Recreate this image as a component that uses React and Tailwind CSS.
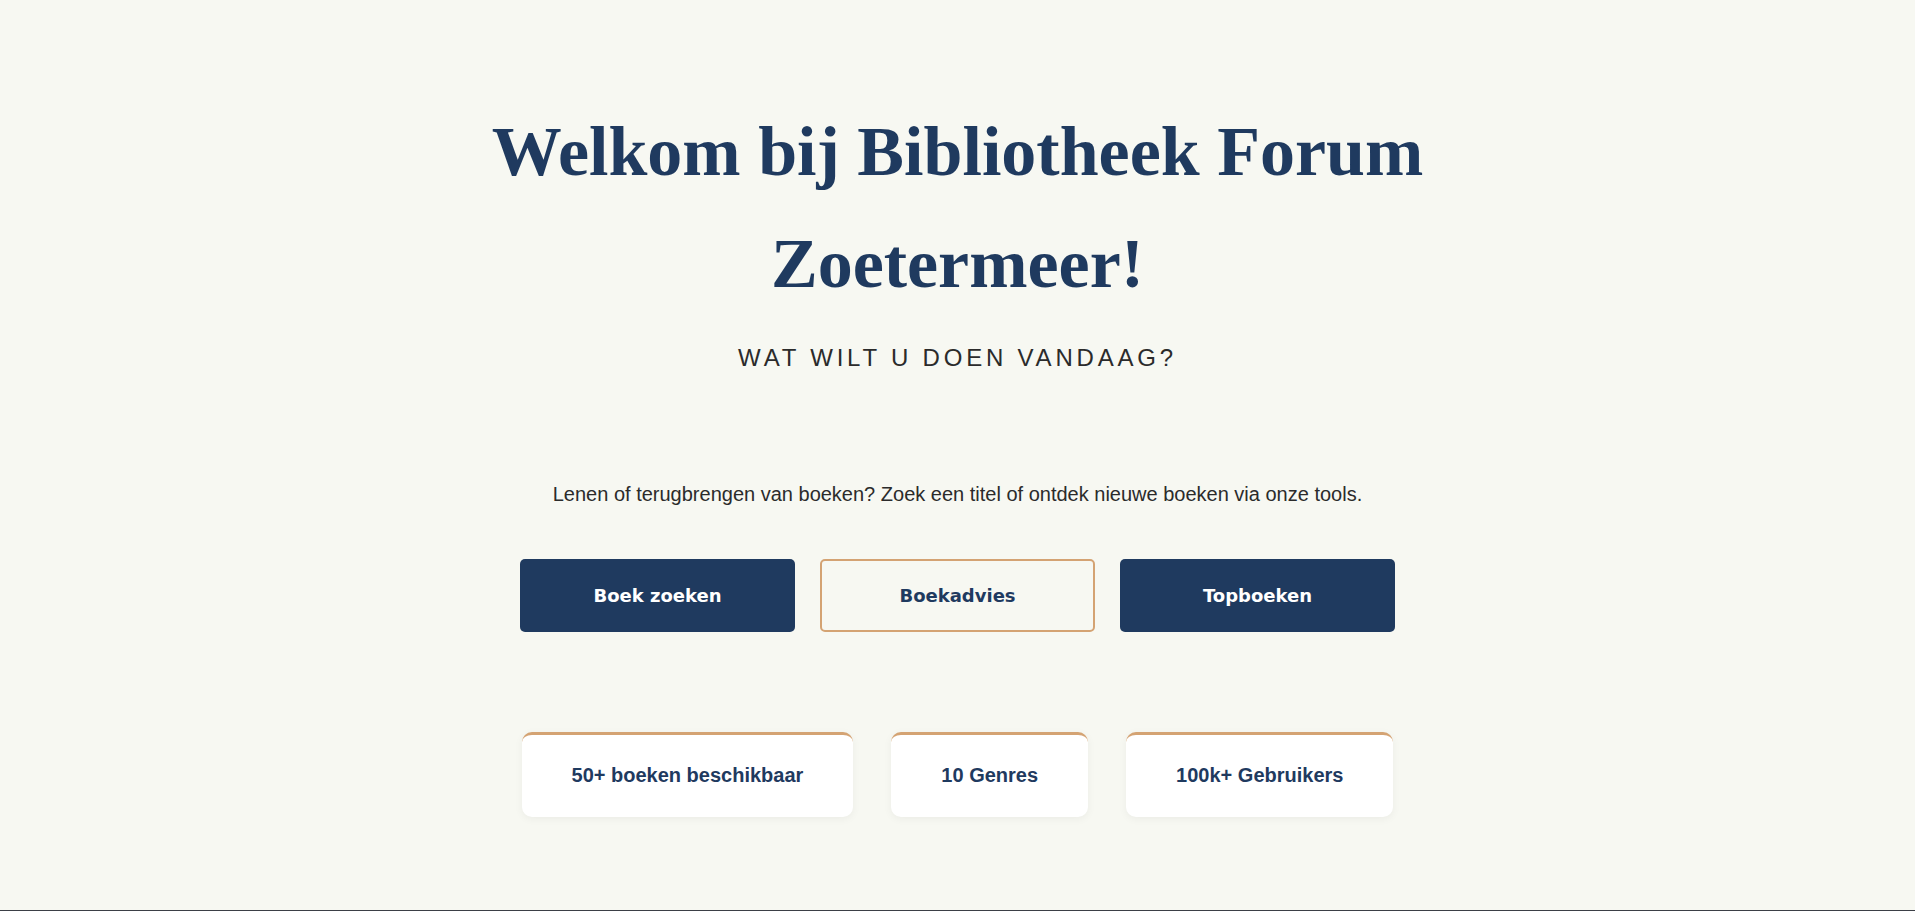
const stats = ['50+ boeken beschikbaar', '10 Genres', '100k+ Gebruikers'];

const App = () => {
  return (
    <div className="min-h-screen bg-[#f7f8f2]">
      {/* Hero */}
      <main className="flex flex-col items-center pt-[96px] pb-[93px] text-center">
        <h1 className="font-['Liberation_Serif','Times_New_Roman',serif] text-[70px] font-bold leading-[1.6] text-[#1f3a5f] max-w-[960px]">
          Welkom bij Bibliotheek Forum Zoetermeer!
        </h1>
        <p className="mt-[24px] font-['Liberation_Sans',Arial,sans-serif] text-[24px] leading-[1.15] tracking-[3.8px] text-[#2b2b2b]">
          WAT WILT U DOEN VANDAAG?
        </p>

        <p className="mt-[107px] font-['Liberation_Sans',Arial,sans-serif] text-[20px] leading-[30px] text-[#2b2b2b]">
          Lenen of terugbrengen van boeken? Zoek een titel of ontdek nieuwe boeken via onze tools.
        </p>

        {/* Actions */}
        <div className="mt-[50px] flex gap-[25px] font-['DejaVu_Sans',Verdana,sans-serif]">
          <button type="button" className="w-[275px] h-[73px] rounded-[5px] bg-[#1f3a5f] text-white text-[18px] font-bold">
            Boek zoeken
          </button>
          <button type="button" className="w-[275px] h-[73px] rounded-[5px] border-2 border-[#d4a373] bg-transparent text-[#1f3a5f] text-[18px] font-bold">
            Boekadvies
          </button>
          <button type="button" className="w-[275px] h-[73px] rounded-[5px] bg-[#1f3a5f] text-white text-[18px] font-bold">
            Topboeken
          </button>
        </div>

        {/* Stats */}
        <div className="mt-[100px] flex gap-[38px]">
          {stats.map((s) => (
            <div
              key={s}
              className="rounded-[10px] border-t-[3px] border-[#d4a373] bg-white px-[50px] pt-[25px] pb-[26px] shadow-[0_2px_8px_rgba(0,0,0,0.05)]"
            >
              <span className="font-['Liberation_Sans',Arial,sans-serif] text-[20px] leading-[31px] font-bold text-[#1f3a5f]">
                {s}
              </span>
            </div>
          ))}
        </div>
      </main>

      <footer className="h-[120px] bg-[#3b3f46]" />
    </div>
  );
};

export default App;
